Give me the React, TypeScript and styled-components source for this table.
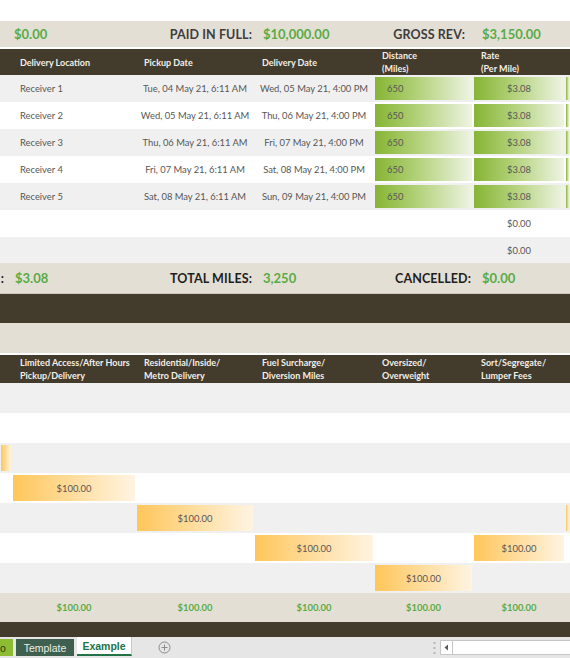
import React from "react";
import styled, { createGlobalStyle } from "styled-components";

const Global = createGlobalStyle`
  html, body { margin: 0; padding: 0; background: #ffffff; }
  body { font-family: Lato, "Open Sans", "Liberation Sans", sans-serif; }
`;

const COLS = "12px 124px 118px 120px 99px 92px 1fr";

const Sheet = styled.div`
  width: 570px;
  height: 658px;
  overflow: hidden;
  display: flex;
  flex-direction: column;
  background: #ffffff;
`;

const TopSpace = styled.div`
  height: 21px;
  background: #ffffff;
`;

const Row = styled.div<{ $h: number; $bg: string; $bt?: string; $bb?: string }>`
  display: grid;
  grid-template-columns: ${COLS};
  height: ${(p) => p.$h}px;
  background: ${(p) => p.$bg};
  border-top: ${(p) => p.$bt ?? "none"};
  border-bottom: ${(p) => p.$bb ?? "none"};
  box-sizing: border-box;
  flex-shrink: 0;
`;

const Band = styled.div<{ $h: number; $bg: string; $bt?: string }>`
  height: ${(p) => p.$h}px;
  background: ${(p) => p.$bg};
  border-top: ${(p) => p.$bt ?? "none"};
  box-sizing: border-box;
  flex-shrink: 0;
`;

const Cell = styled.div<{ $align?: "left" | "center" | "right"; $pl?: number; $pr?: number }>`
  display: flex;
  align-items: center;
  justify-content: ${(p) =>
    p.$align === "center" ? "center" : p.$align === "right" ? "flex-end" : "flex-start"};
  padding-left: ${(p) => p.$pl ?? 0}px;
  padding-right: ${(p) => p.$pr ?? 0}px;
  white-space: nowrap;
  overflow: hidden;
  min-width: 0;
`;

const Label = styled.span<{ $tone?: "dark" | "black" }>`
  font-size: 12.5px;
  font-weight: 700;
  letter-spacing: 0.1px;
  color: ${(p) => (p.$tone === "black" ? "#1e1e1e" : "#3d3d3d")};
`;

const Value = styled.span`
  font-size: 13px;
  font-weight: 700;
  color: #58ac46;
`;

const HeadText = styled.div`
  font-size: 9px;
  font-weight: 700;
  color: #f2efe8;
  line-height: 13px;
`;

const Text = styled.span`
  font-size: 9.4px;
  color: #575757;
`;

const Fill = styled.div<{ $kind: "green" | "orange"; $align?: "left" | "center"; $pl?: number }>`
  flex: 1;
  align-self: stretch;
  margin: 2px 1px 2px 1px;
  display: flex;
  align-items: center;
  justify-content: ${(p) => (p.$align === "left" ? "flex-start" : "center")};
  padding-left: ${(p) => p.$pl ?? 0}px;
  background: ${(p) =>
    p.$kind === "green"
      ? "linear-gradient(90deg, #86b534 0%, #b4d27c 45%, #eef4e3 100%)"
      : "linear-gradient(90deg, #ffc65a 0%, #ffdb98 45%, #fff4e2 100%)"};
`;

const Total = styled.span`
  font-size: 9.4px;
  font-weight: 700;
  color: #58ac46;
`;

const TabBar = styled.div`
  height: 21px;
  background: #e6e6e6;
  display: flex;
  align-items: stretch;
  flex-shrink: 0;
  font-family: "Liberation Sans", Arial, sans-serif;
`;

const Tab = styled.div<{ $variant: "lime" | "dark" | "active"; $w: number }>`
  width: ${(p) => p.$w}px;
  box-sizing: border-box;
  display: flex;
  align-items: center;
  justify-content: ${(p) => (p.$variant === "lime" ? "flex-start" : "center")};
  overflow: hidden;
  font-size: 10.5px;
  margin-right: 3px;
  margin-top: ${(p) => (p.$variant === "active" ? 0 : 2)}px;
  margin-bottom: 2px;
  background: ${(p) =>
    p.$variant === "lime" ? "#8dbb31" : p.$variant === "dark" ? "#40604f" : "#ffffff"};
  color: ${(p) => (p.$variant === "active" ? "#217346" : p.$variant === "lime" ? "#2a3d12" : "#e9eee9")};
  font-weight: ${(p) => (p.$variant === "active" ? 700 : 400)};
  border-bottom: ${(p) => (p.$variant === "active" ? "2px solid #217346" : "none")};
  border-right: ${(p) => (p.$variant === "active" ? "1px solid #c8c8c8" : "none")};
`;

const AddTab = styled.div`
  margin-left: 23px;
  display: flex;
  align-items: center;
`;

const Spacer = styled.div`
  flex: 1;
`;

const Grip = styled.div`
  width: 12px;
  display: flex;
  align-items: center;
  justify-content: center;
`;

const Scroll = styled.div`
  width: 130px;
  margin: 3px 0 3px 0;
  background: #ffffff;
  border: 1px solid #c6c6c6;
  border-right: none;
  box-sizing: border-box;
  display: flex;
`;

const ScrollArrow = styled.div`
  width: 11px;
  border-right: 1px solid #c6c6c6;
  display: flex;
  align-items: center;
  justify-content: center;
`;

const C = {
  beige: "#e4dfd5",
  dark: "#433b2b",
  grey: "#f0f0f0",
  white: "#ffffff",
};

const deliveries = [
  ["Receiver 1", "Tue, 04 May 21, 6:11 AM", "Wed, 05 May 21, 4:00 PM"],
  ["Receiver 2", "Wed, 05 May 21, 6:11 AM", "Thu, 06 May 21, 4:00 PM"],
  ["Receiver 3", "Thu, 06 May 21, 6:11 AM", "Fri, 07 May 21, 4:00 PM"],
  ["Receiver 4", "Fri, 07 May 21, 6:11 AM", "Sat, 08 May 21, 4:00 PM"],
  ["Receiver 5", "Sat, 08 May 21, 6:11 AM", "Sun, 09 May 21, 4:00 PM"],
];

// which columns (index 0..6) carry a fee in each of the lower rows
const feeRows: number[][] = [[], [], [0], [1], [2, 6], [3, 5], [4]];

export default function App() {
  return (
    <Sheet>
      <Global />
      <TopSpace />

      <Row $h={28} $bg={C.beige} $bb="2px solid #ffffff">
        <Cell />
        <Cell $pl={2}>
          <Value>$0.00</Value>
        </Cell>
        <Cell $align="right" $pr={2}>
          <Label>PAID IN FULL:</Label>
        </Cell>
        <Cell $pl={9}>
          <Value>$10,000.00</Value>
        </Cell>
        <Cell $align="right" $pr={8}>
          <Label>GROSS REV:</Label>
        </Cell>
        <Cell $pl={9}>
          <Value>$3,150.00</Value>
        </Cell>
        <Cell />
      </Row>

      <Row $h={26} $bg={C.dark}>
        <Cell />
        <Cell $pl={8}>
          <HeadText>Delivery Location</HeadText>
        </Cell>
        <Cell $pl={8}>
          <HeadText>Pickup Date</HeadText>
        </Cell>
        <Cell $pl={8}>
          <HeadText>Delivery Date</HeadText>
        </Cell>
        <Cell $pl={8}>
          <HeadText>
            Distance
            <br />
            (Miles)
          </HeadText>
        </Cell>
        <Cell $pl={8}>
          <HeadText>
            Rate
            <br />
            (Per Mile)
          </HeadText>
        </Cell>
        <Cell />
      </Row>

      {deliveries.map(([loc, pick, del], i) => (
        <Row key={loc} $h={27} $bg={i % 2 === 0 ? C.grey : C.white}>
          <Cell />
          <Cell $pl={8}>
            <Text>{loc}</Text>
          </Cell>
          <Cell $align="center">
            <Text>{pick}</Text>
          </Cell>
          <Cell $align="center">
            <Text>{del}</Text>
          </Cell>
          <Cell>
            <Fill $kind="green" $align="left" $pl={12}>
              <Text>650</Text>
            </Fill>
          </Cell>
          <Cell>
            <Fill $kind="green">
              <Text>$3.08</Text>
            </Fill>
          </Cell>
          <Cell>
            <Fill $kind="green" />
          </Cell>
        </Row>
      ))}

      {[C.white, C.grey].map((bg, i) => (
        <Row key={i} $h={i === 0 ? 27 : 26} $bg={bg}>
          <Cell />
          <Cell />
          <Cell />
          <Cell />
          <Cell />
          <Cell $align="center">
            <Text>$0.00</Text>
          </Cell>
          <Cell />
        </Row>
      ))}

      <Row $h={31} $bg={C.beige} $bb="1px solid #cfc9bd">
        <Cell $align="right" $pr={8}>
          <Label $tone="black">:</Label>
        </Cell>
        <Cell $pl={3}>
          <Value>$3.08</Value>
        </Cell>
        <Cell $align="right" $pr={2}>
          <Label $tone="black">TOTAL MILES:</Label>
        </Cell>
        <Cell $pl={9}>
          <Value>3,250</Value>
        </Cell>
        <Cell $align="right" $pr={2}>
          <Label $tone="black">CANCELLED:</Label>
        </Cell>
        <Cell $pl={9}>
          <Value>$0.00</Value>
        </Cell>
        <Cell />
      </Row>

      <Band $h={29} $bg={C.dark} />
      <Band $h={30} $bg={C.beige} />

      <Row $h={30} $bg={C.dark} $bt="2px solid #ffffff">
        <Cell />
        <Cell $pl={8}>
          <HeadText>
            Limited Access/After Hours
            <br />
            Pickup/Delivery
          </HeadText>
        </Cell>
        <Cell $pl={8}>
          <HeadText>
            Residential/Inside/
            <br />
            Metro Delivery
          </HeadText>
        </Cell>
        <Cell $pl={8}>
          <HeadText>
            Fuel Surcharge/
            <br />
            Diversion Miles
          </HeadText>
        </Cell>
        <Cell $pl={8}>
          <HeadText>
            Oversized/
            <br />
            Overweight
          </HeadText>
        </Cell>
        <Cell $pl={8}>
          <HeadText>
            Sort/Segregate/
            <br />
            Lumper Fees
          </HeadText>
        </Cell>
        <Cell />
      </Row>

      {feeRows.map((cols, r) => (
        <Row key={r} $h={30} $bg={r % 2 === 0 ? C.grey : C.white}>
          {[0, 1, 2, 3, 4, 5, 6].map((c) => (
            <Cell key={c}>
              {cols.includes(c) ? (
                <Fill $kind="orange">{c > 0 && c < 6 ? <Text>$100.00</Text> : null}</Fill>
              ) : null}
            </Cell>
          ))}
        </Row>
      ))}

      <Row $h={29} $bg={C.beige}>
        <Cell />
        {[1, 2, 3, 4, 5].map((c) => (
          <Cell key={c} $align="center">
            <Total>$100.00</Total>
          </Cell>
        ))}
        <Cell />
      </Row>

      <Band $h={15} $bg={C.dark} />

      <TabBar>
        <Tab $variant="lime" $w={13}>
          o
        </Tab>
        <Tab $variant="dark" $w={58}>
          Template
        </Tab>
        <Tab $variant="active" $w={55}>
          Example
        </Tab>
        <AddTab>
          <svg width="13" height="13" viewBox="0 0 13 13">
            <circle cx="6.5" cy="6.5" r="5.5" fill="none" stroke="#8a8a8a" strokeWidth="1" />
            <path d="M6.5 3.5v6M3.5 6.5h6" stroke="#8a8a8a" strokeWidth="1" />
          </svg>
        </AddTab>
        <Spacer />
        <Grip>
          <svg width="3" height="14" viewBox="0 0 3 14">
            <rect x="0.5" y="1" width="2" height="2" fill="#b5b5b5" />
            <rect x="0.5" y="6" width="2" height="2" fill="#b5b5b5" />
            <rect x="0.5" y="11" width="2" height="2" fill="#b5b5b5" />
          </svg>
        </Grip>
        <Scroll>
          <ScrollArrow>
            <svg width="5" height="7" viewBox="0 0 5 7">
              <path d="M4 0.5L0.5 3.5L4 6.5Z" fill="#5a5a5a" />
            </svg>
          </ScrollArrow>
        </Scroll>
      </TabBar>
    </Sheet>
  );
}
